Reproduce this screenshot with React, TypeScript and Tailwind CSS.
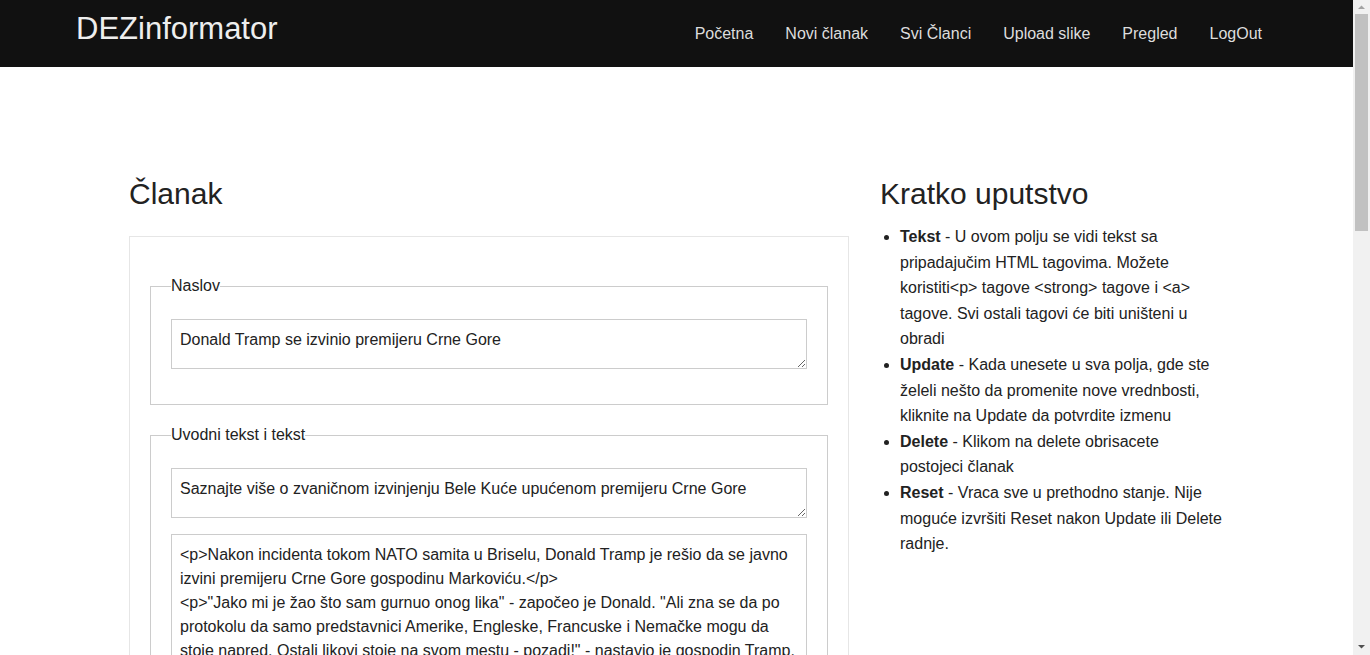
import React from "react";

const body = `<p>Nakon incidenta tokom NATO samita u Briselu, Donald Tramp je rešio da se javno izvini premijeru Crne Gore gospodinu Markoviću.</p>
<p>"Jako mi je žao što sam gurnuo onog lika" - započeo je Donald. "Ali zna se da po protokolu da samo predstavnici Amerike, Engleske, Francuske i Nemačke mogu da stoje napred. Ostali likovi stoje na svom mestu - pozadi!" - nastavio je gospodin Tramp.</p>
<p>On je dodao da se nada da će odnosi dve zemlje ostati dobri.</p>`;

function Scrollbar() {
  return (
    <div className="w-[17px] shrink-0 h-full bg-[#f1f1f1] flex flex-col items-center">
      <svg width="17" height="14" viewBox="0 0 17 14" className="shrink-0">
        <path d="M5 9 L8.5 5.5 L12 9 Z" fill="#a3a3a3" />
      </svg>
      <div className="w-[13px] h-[217px] bg-[#c1c1c1]" />
      <div className="flex-1" />
      <svg width="17" height="17" viewBox="0 0 17 17" className="shrink-0">
        <path d="M5 7 L12 7 L8.5 10.5 Z" fill="#505050" />
      </svg>
    </div>
  );
}

export default function App() {
  const font = { fontFamily: '"Liberation Sans", Arial, sans-serif' };
  return (
    <div className="h-screen flex overflow-hidden bg-white text-[#222]" style={font}>
      <div className="flex-1 min-w-0 overflow-hidden">
        <nav className="h-[67px] bg-[#111111] flex items-center pl-[76px] pr-[75px]">
          <div className="self-start mt-[11px] text-[31px] leading-[36px] text-[#eeeeee]">DEZinformator</div>
          <ul className="ml-auto flex items-center text-[16px] leading-[20px] text-[#dddddd]">
            {["Početna", "Novi članak", "Svi Članci", "Upload slike", "Pregled", "LogOut"].map((l) => (
              <li key={l} className="px-4">{l}</li>
            ))}
          </ul>
        </nav>

        <main className="flex pl-[129px] pt-[110px] gap-[31px]">
          <section className="w-[720px] shrink-0">
            <h2 className="text-[30px] leading-[33px] mb-[26px]">Članak</h2>
            <div className="border border-[#e6e6e6] px-5 pt-10 pb-10">
              <fieldset className="border border-[#cccccc] px-5 pt-6 pb-[35px] mb-[21px]">
                <legend className="text-[16px] leading-[18px]">Naslov</legend>
                <textarea
                  readOnly
                  className="block w-full h-[50px] border border-[#cccccc] px-2 py-2 text-[16px] leading-[24px] text-[#222] outline-none"
                  defaultValue="Donald Tramp se izvinio premijeru Crne Gore"
                />
              </fieldset>
              <fieldset className="border border-[#cccccc] px-5 pt-6 pb-[35px]">
                <legend className="text-[16px] leading-[18px]">Uvodni tekst i tekst</legend>
                <textarea
                  readOnly
                  className="block w-full h-[50px] border border-[#cccccc] px-2 py-2 text-[16px] leading-[24px] text-[#222] outline-none"
                  defaultValue="Saznajte više o zvaničnom izvinjenju Bele Kuće upućenom premijeru Crne Gore"
                />
                <textarea
                  readOnly
                  className="block w-full h-[340px] mt-4 border border-[#cccccc] px-2 py-2 text-[16px] leading-[24px] text-[#222] outline-none"
                  defaultValue={body}
                />
              </fieldset>
            </div>
          </section>

          <aside className="w-[343px] shrink-0">
            <h2 className="text-[30px] leading-[33px] mb-[14px]">Kratko uputstvo</h2>
            <ul className="list-disc pl-5 text-[16px] leading-[25.6px]">
              <li>
                <strong>Tekst</strong> - U ovom polju se vidi tekst sa pripadajučim HTML tagovima. Možete koristiti&lt;p&gt; tagove &lt;strong&gt; tagove i &lt;a&gt; tagove. Svi ostali tagovi će biti uništeni u obradi
              </li>
              <li>
                <strong>Update</strong> - Kada unesete u sva polja, gde ste želeli nešto da promenite nove vrednbosti, kliknite na Update da potvrdite izmenu
              </li>
              <li>
                <strong>Delete</strong> - Klikom na delete obrisacete postojeci članak
              </li>
              <li>
                <strong>Reset</strong> - Vraca sve u prethodno stanje. Nije moguće izvršiti Reset nakon Update ili Delete radnje.
              </li>
            </ul>
          </aside>
        </main>
      </div>
      <Scrollbar />
    </div>
  );
}
